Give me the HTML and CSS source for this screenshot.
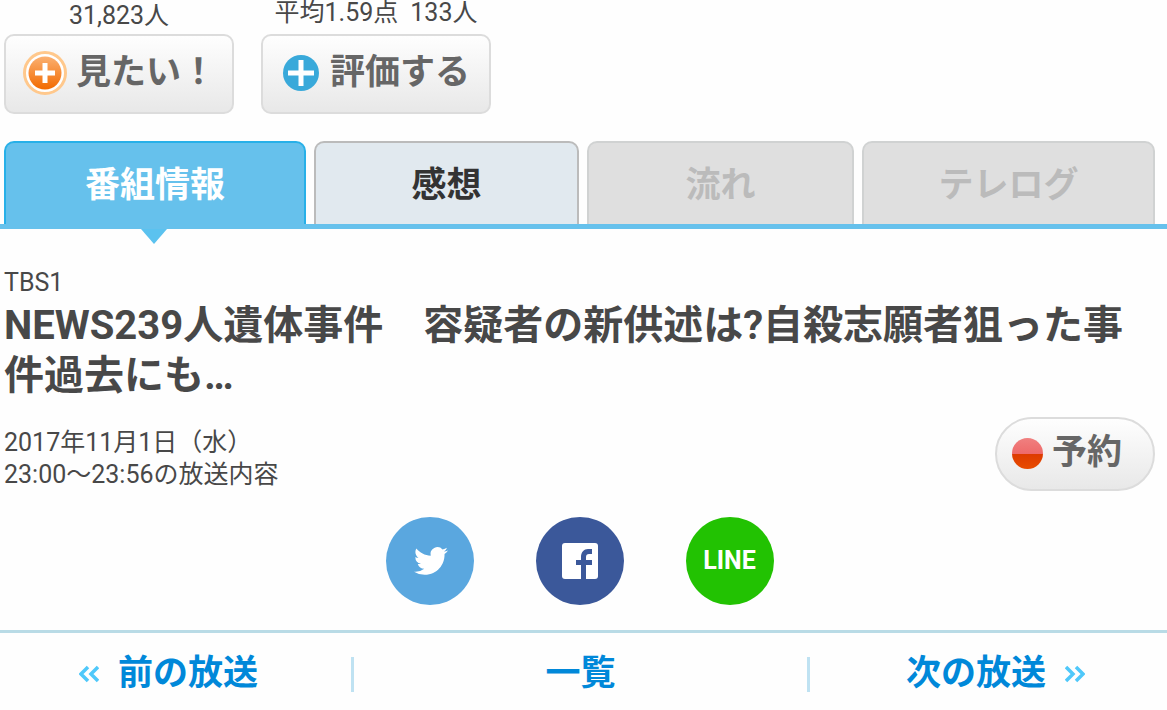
FILE: index.html
```html
<!DOCTYPE html>
<html lang="ja">
<head>
    <meta charset="UTF-8">
    <meta name="viewport" content="width=device-width, initial-scale=1.0">
    <title>番組情報</title>
    <link rel="stylesheet" href="styles.css">
</head>
<body>
    <!-- Want to watch / rating -->
    <div class="actions">
        <div class="action">
            <p class="count">31,823人</p>
            <button type="button" class="btn">
                <svg class="icon-want" viewBox="0 0 44 44" aria-hidden="true">
                    <defs>
                        <linearGradient id="orange" x1="0" y1="0" x2="0" y2="1">
                            <stop offset="0" stop-color="#fbb070"/>
                            <stop offset="1" stop-color="#f26a00"/>
                        </linearGradient>
                    </defs>
                    <circle cx="22" cy="22" r="20.5" fill="#fff" stroke="#ffc88c" stroke-width="3"/>
                    <circle cx="22" cy="22" r="16.5" fill="url(#orange)"/>
                    <path d="M22 12v20M12 22h20" stroke="#fff" stroke-width="5"/>
                </svg>
                見たい！
            </button>
        </div>
        <div class="action">
            <p class="count count-rating"><span>平均1.59点</span><span>133人</span></p>
            <button type="button" class="btn btn-rate">
                <svg class="icon-rate" viewBox="0 0 36 36" aria-hidden="true">
                    <circle cx="18" cy="18" r="18" fill="#39a9da"/>
                    <path d="M18 5v26M5 18h26" stroke="#fff" stroke-width="5"/>
                </svg>
                評価する
            </button>
        </div>
    </div>

    <!-- Tabs -->
    <div class="tabs">
        <button type="button" class="tab active">番組情報</button>
        <button type="button" class="tab">感想</button>
        <button type="button" class="tab" disabled>流れ</button>
        <button type="button" class="tab" disabled>テレログ</button>
    </div>

    <!-- Program -->
    <div class="program">
        <p>TBS1</p>
        <h1>NEWS239人遺体事件　容疑者の新供述は?自殺志願者狙った事件過去にも…</h1>
        <div class="schedule">
            <p>2017年11月1日（水）<br>23:00～23:56の放送内容</p>
            <button type="button" class="btn btn-reserve">
                <span class="rec"></span>
                予約
            </button>
        </div>
        <div class="share">
            <a href="#" class="share-link twitter" aria-label="Twitter">
                <svg width="34" height="34" viewBox="0 0 24 24" fill="#fff" aria-hidden="true">
                    <path d="M23.953 4.57a10 10 0 01-2.825.775 4.958 4.958 0 002.163-2.723c-.951.555-2.005.959-3.127 1.184a4.92 4.92 0 00-8.384 4.482C7.69 8.095 4.067 6.13 1.64 3.162a4.822 4.822 0 00-.666 2.475c0 1.71.87 3.213 2.188 4.096a4.904 4.904 0 01-2.228-.616v.06a4.923 4.923 0 003.946 4.827 4.996 4.996 0 01-2.212.085 4.936 4.936 0 004.604 3.417 9.867 9.867 0 01-6.102 2.105c-.39 0-.779-.023-1.17-.067a13.995 13.995 0 007.557 2.209c9.053 0 13.998-7.496 13.998-13.985 0-.21 0-.42-.015-.63A9.935 9.935 0 0024 4.59z"/>
                </svg>
            </a>
            <a href="#" class="share-link facebook" aria-label="Facebook">
                <svg width="36" height="36" viewBox="0 0 36 36" aria-hidden="true">
                    <rect width="36" height="36" rx="3" fill="#fff"/>
                    <path d="M19 36V22h-5v-5h5v-3c0-5 3-8 7-8h4v5h-3c-2 0-3 1-3 3v3h6v5h-6v14z" fill="#3b589a"/>
                </svg>
            </a>
            <a href="#" class="share-link line">LINE</a>
        </div>
    </div>

    <!-- Previous / next broadcast -->
    <nav class="pager">
        <a href="#" class="prev">
            <svg class="chevron" viewBox="0 0 20 18" aria-hidden="true">
                <path d="M9 2L2 9l7 7M19 2l-7 7 7 7"/>
            </svg>
            前の放送
        </a>
        <a href="#">一覧</a>
        <a href="#" class="next">
            次の放送
            <svg class="chevron" viewBox="0 0 20 18" aria-hidden="true">
                <path d="M1 2l7 7-7 7M11 2l7 7-7 7"/>
            </svg>
        </a>
    </nav>
</body>
</html>
```

FILE: styles.css
```css
:root {
    --blue: #66c1ec;
    --link: #0088d9;
    --text: #484848;
    --gray: #dfdfdf;
}

*, *::before, *::after {
    box-sizing: border-box;
    margin: 0;
    padding: 0;
}

body {
    font-family: Roboto, "Noto Sans CJK JP", sans-serif;
    font-size: 25px;
    line-height: 32px;
    color: var(--text);
    background: #fefefe;
}

button {
    font-family: inherit;
    font-size: 35px;
    font-weight: 700;
    cursor: pointer;
}

a {
    text-decoration: none;
}

.actions {
    display: flex;
    align-items: flex-end;
    gap: 27px;
    padding: 0 4px;
}

.count {
    margin-bottom: 2px;
    line-height: 32px;
    text-align: center;
}

.count-rating {
    display: flex;
    justify-content: center;
    gap: 12px;
    margin-bottom: 8px;
    line-height: 26px;
}

.btn {
    display: flex;
    align-items: center;
    gap: 9px;
    width: 230px;
    height: 80px;
    padding: 0 0 2px 17px;
    border: 2px solid #dcdcdc;
    border-radius: 10px;
    background: linear-gradient(#fefefe, #e8e8e8);
    color: #666;
    line-height: 40px;
    white-space: nowrap;
}

.btn-rate {
    gap: 11px;
    padding-left: 20px;
}

.icon-want {
    width: 44px;
    height: 44px;
}

.icon-rate {
    width: 36px;
    height: 36px;
}

.tabs {
    display: grid;
    grid-template-columns: 302fr 265fr 267fr 293fr;
    gap: 8px;
    margin-top: 27px;
    padding: 0 12px 0 4px;
    border-bottom: 5px solid var(--blue);
}

.tab {
    position: relative;
    height: 83px;
    padding-bottom: 5px;
    border: 2px solid #bbb;
    border-bottom: 0;
    border-radius: 10px 10px 0 0;
    background: #e1e9ef;
    color: #333;
}

.tab:disabled {
    border-color: #d0d2d2;
    background: var(--gray);
    color: #bbb;
    cursor: default;
}

.tab.active {
    border-color: #27b0e8;
    background: var(--blue);
    color: #fff;
}

.tab.active::after {
    content: "";
    position: absolute;
    top: 100%;
    left: 50%;
    margin: 5px 0 0 -14px;
    border: 13px solid transparent;
    border-top: 15px solid #5bc2ef;
    border-bottom: 0;
}

.program {
    padding: 38px 12px 25px 4px;
}

h1 {
    margin-top: 2px;
    font-size: 40px;
    font-weight: 700;
    line-height: 50px;
}

.schedule {
    display: flex;
    justify-content: space-between;
    align-items: flex-end;
    margin-top: 16px;
}

.btn-reserve {
    width: 160px;
    height: 74px;
    padding-left: 15px;
    border-radius: 37px;
}

.rec {
    width: 31px;
    height: 31px;
    border-radius: 50%;
    background: linear-gradient(#f08080, #ee6a6a 50%, #dd3a00 50%, #e84c00);
}

.share {
    display: flex;
    justify-content: center;
    gap: 62px;
    margin-top: 26px;
}

.share-link {
    display: flex;
    justify-content: center;
    align-items: center;
    width: 88px;
    height: 88px;
    border-radius: 50%;
    color: #fff;
    font-weight: 700;
}

.twitter {
    padding-left: 3px;
    background: #5aa7df;
}

.facebook {
    background: #3b589a;
}

.line {
    background: #22c202;
}

.pager {
    display: grid;
    grid-template-columns: 354fr 456fr 357fr;
    padding: 24px 0 18px;
    border-top: 3px solid #b9dbe6;
}

.pager a {
    display: flex;
    justify-content: center;
    align-items: center;
    gap: 19px;
    height: 35px;
    padding-bottom: 2px;
    color: var(--link);
    font-size: 35px;
    font-weight: 700;
}

.pager a:not(:last-child) {
    border-right: 3px solid #bfe2f2;
}

.pager .prev {
    padding-right: 14px;
}

.pager .next {
    padding-left: 14px;
}

.chevron {
    width: 20px;
    height: 18px;
    fill: none;
    stroke: #4fc8fa;
    stroke-width: 3.5;
}
```
